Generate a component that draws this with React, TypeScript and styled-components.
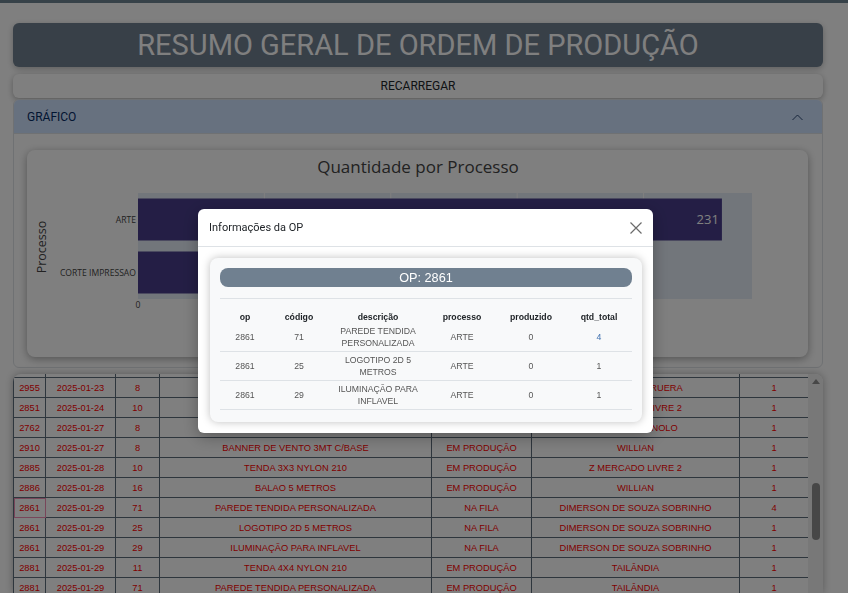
import React from 'react'
import styled, { createGlobalStyle } from 'styled-components'

const GlobalStyle = createGlobalStyle`
  html, body {
    margin: 0;
    padding: 0;
    height: 100%;
    overflow: hidden;
    background: #fff;
  }
  body {
    font-family: Roboto, "Liberation Sans", Arial, sans-serif;
    color: #212529;
  }
  #root {
    height: 100%;
  }
`

type Row = {
  op: string
  data: string
  codigo: string
  descricao: string
  status: string
  cliente: string
  qtd: string
}

// first entry is the row scrolled almost out of view, only its borders show
const rows: Row[] = [
  { op: '', data: '', codigo: '', descricao: '', status: '', cliente: '', qtd: '' },
  { op: '2955', data: '2025-01-23', codigo: '8', descricao: 'TENDA 3X3 NYLON 210', status: 'EM PRODUÇÃO', cliente: 'LOJA ALFA BARUERA', qtd: '1' },
  { op: '2851', data: '2025-01-24', codigo: '10', descricao: 'TENDA 3X3 NYLON 210', status: 'EM PRODUÇÃO', cliente: 'Z MERCADO LIVRE 2', qtd: '1' },
  { op: '2762', data: '2025-01-27', codigo: '8', descricao: 'BANNER DE VENTO 3MT C/BASE', status: 'EM PRODUÇÃO', cliente: 'MARIO SPAGNOLO', qtd: '1' },
  { op: '2910', data: '2025-01-27', codigo: '8', descricao: 'BANNER DE VENTO 3MT C/BASE', status: 'EM PRODUÇÃO', cliente: 'WILLIAN', qtd: '1' },
  { op: '2885', data: '2025-01-28', codigo: '10', descricao: 'TENDA 3X3 NYLON 210', status: 'EM PRODUÇÃO', cliente: 'Z MERCADO LIVRE 2', qtd: '1' },
  { op: '2886', data: '2025-01-28', codigo: '16', descricao: 'BALAO 5 METROS', status: 'EM PRODUÇÃO', cliente: 'WILLIAN', qtd: '1' },
  { op: '2861', data: '2025-01-29', codigo: '71', descricao: 'PAREDE TENDIDA PERSONALIZADA', status: 'NA FILA', cliente: 'DIMERSON DE SOUZA SOBRINHO', qtd: '4' },
  { op: '2861', data: '2025-01-29', codigo: '25', descricao: 'LOGOTIPO 2D 5 METROS', status: 'NA FILA', cliente: 'DIMERSON DE SOUZA SOBRINHO', qtd: '1' },
  { op: '2861', data: '2025-01-29', codigo: '29', descricao: 'ILUMINAÇÃO PARA INFLAVEL', status: 'NA FILA', cliente: 'DIMERSON DE SOUZA SOBRINHO', qtd: '1' },
  { op: '2881', data: '2025-01-29', codigo: '11', descricao: 'TENDA 4X4 NYLON 210', status: 'EM PRODUÇÃO', cliente: 'TAILÂNDIA', qtd: '1' },
  { op: '2881', data: '2025-01-29', codigo: '71', descricao: 'PAREDE TENDIDA PERSONALIZADA', status: 'EM PRODUÇÃO', cliente: 'TAILÂNDIA', qtd: '1' },
]

const gridCols = [32, 70, 44, 272, 100, 208, 69]

const opItems = [
  { op: '2861', codigo: '71', descricao: 'PAREDE TENDIDA PERSONALIZADA', processo: 'ARTE', produzido: '0', qtd: '4' },
  { op: '2861', codigo: '25', descricao: 'LOGOTIPO 2D 5 METROS', processo: 'ARTE', produzido: '0', qtd: '1' },
  { op: '2861', codigo: '29', descricao: 'ILUMINAÇÃO PARA INFLAVEL', processo: 'ARTE', produzido: '0', qtd: '1' },
]

const detailCols = [50, 58, 100, 68, 70, 66]

// chart
const chartData = [
  { label: 'ARTE', value: 231 },
  { label: 'CORTE IMPRESSAO', value: 147 },
]
const PLOT_X = 111
const PLOT_Y = 43
const PLOT_W = 614
const PLOT_H = 106
const X_MAX = 242.9
const scaleX = (v: number) => (v / X_MAX) * PLOT_W

const Chart = () => {
  const band = PLOT_H / chartData.length
  const barH = 42
  return (
    <ChartSvg viewBox="0 0 781 207">
      <text x={391} y={23} textAnchor="middle" fontSize={17} fill="#444">
        Quantidade por Processo
      </text>
      <rect x={PLOT_X} y={PLOT_Y} width={PLOT_W} height={PLOT_H} fill="#e5ecf6" />
      {[50, 100, 150, 200].map((t) => (
        <line
          key={t}
          x1={PLOT_X + scaleX(t)}
          x2={PLOT_X + scaleX(t)}
          y1={PLOT_Y}
          y2={PLOT_Y + PLOT_H}
          stroke="#fff"
          strokeWidth={1}
        />
      ))}
      {chartData.map((d, i) => {
        const y = PLOT_Y + band * i + (band - barH) / 2
        const w = scaleX(d.value)
        return (
          <g key={d.label}>
            <rect x={PLOT_X} y={y} width={w} height={barH} fill="#483d8b" />
            <text x={PLOT_X + w - 3} y={y + barH / 2 + 4.5} textAnchor="end" fontSize={13} fill="#fff">
              {d.value}
            </text>
            <text x={PLOT_X - 2} y={y + barH / 2 + 3} textAnchor="end" fontSize={8.6} fill="#444">
              {d.label}
            </text>
          </g>
        )
      })}
      {[0, 50, 100, 150, 200].map((t) => (
        <text key={t} x={PLOT_X + scaleX(t)} y={158} textAnchor="middle" fontSize={8.6} fill="#444">
          {t}
        </text>
      ))}
      <text
        x={14}
        y={97}
        textAnchor="middle"
        dominantBaseline="central"
        fontSize={12.5}
        fill="#444"
        transform="rotate(-90 14 97)"
      >
        Processo
      </text>
    </ChartSvg>
  )
}

const App = () => {
  return (
    <>
      <GlobalStyle />
      <Page>
        <TopStrip />
        <Content>
          <TitleBar>
            <Title>RESUMO GERAL DE ORDEM DE PRODUÇÃO</Title>
          </TitleBar>
          <ReloadButton>Recarregar</ReloadButton>
          <Accordion>
            <AccordionHeader>
              <span>GRÁFICO</span>
              <svg width="11" height="7" viewBox="0 0 11 7">
                <polyline points="0.5,6 5.5,1 10.5,6" fill="none" stroke="#1e3a66" strokeWidth="0.9" />
              </svg>
            </AccordionHeader>
            <AccordionBody>
              <ChartCard>
                <Chart />
              </ChartCard>
            </AccordionBody>
          </Accordion>
          <TableBox>
            <ScrollArea>
              <Grid>
                <colgroup>
                  {gridCols.map((w, i) => (
                    <col key={i} style={{ width: w }} />
                  ))}
                </colgroup>
                <tbody>
                  {rows.map((r, i) => (
                    <tr key={i}>
                      <GridCell $focused={i === 7}>{r.op}</GridCell>
                      <GridCell>{r.data}</GridCell>
                      <GridCell>{r.codigo}</GridCell>
                      <GridCell>{r.descricao}</GridCell>
                      <GridCell>{r.status}</GridCell>
                      <GridCell>{r.cliente}</GridCell>
                      <GridCell>{r.qtd}</GridCell>
                    </tr>
                  ))}
                </tbody>
              </Grid>
            </ScrollArea>
            <ScrollTrack>
              <ScrollArrow />
              <ScrollThumb />
            </ScrollTrack>
          </TableBox>
        </Content>
      </Page>

      <Backdrop>
        <Modal>
          <ModalHeader>
            <ModalTitle>Informações da OP</ModalTitle>
            <CloseButton aria-label="Fechar">
              <svg width="12" height="12" viewBox="0 0 12 12">
                <path d="M0.5 0.5 L11.5 11.5 M11.5 0.5 L0.5 11.5" stroke="#6b6b6b" strokeWidth="1.2" />
              </svg>
            </CloseButton>
          </ModalHeader>
          <ModalBody>
            <InfoCard>
              <OpPill>OP: 2861</OpPill>
              <DetailTable>
                <colgroup>
                  {detailCols.map((w, i) => (
                    <col key={i} style={{ width: w }} />
                  ))}
                </colgroup>
                <thead>
                  <tr>
                    <DetailHead>op</DetailHead>
                    <DetailHead>código</DetailHead>
                    <DetailHead>descrição</DetailHead>
                    <DetailHead>processo</DetailHead>
                    <DetailHead>produzido</DetailHead>
                    <DetailHead>qtd_total</DetailHead>
                  </tr>
                </thead>
                <tbody>
                  {opItems.map((it, i) => (
                    <tr key={i}>
                      <DetailCell>{it.op}</DetailCell>
                      <DetailCell>{it.codigo}</DetailCell>
                      <DetailCell>{it.descricao}</DetailCell>
                      <DetailCell>{it.processo}</DetailCell>
                      <DetailCell>{it.produzido}</DetailCell>
                      <DetailCell $accent={it.qtd !== '1'}>{it.qtd}</DetailCell>
                    </tr>
                  ))}
                </tbody>
              </DetailTable>
            </InfoCard>
          </ModalBody>
        </Modal>
      </Backdrop>
    </>
  )
}

export default App

const Page = styled.div`
  height: 100vh;
  display: flex;
  flex-direction: column;
`
const TopStrip = styled.div`
  height: 3px;
  flex-shrink: 0;
  background: #6f8592;
`
const Content = styled.div`
  flex: 1;
  min-height: 0;
  display: flex;
  flex-direction: column;
  padding: 20px 25px 0 13px;
`
const TitleBar = styled.header`
  flex-shrink: 0;
  height: 44px;
  display: flex;
  align-items: center;
  justify-content: center;
  background: #708090;
  border-radius: 6px;
  box-shadow: 0 2px 6px rgba(0, 0, 0, 0.25);
`
const Title = styled.h1`
  margin: 0;
  font-size: 29px;
  font-weight: 400;
  line-height: 1;
  color: #fff;
`
const ReloadButton = styled.button`
  flex-shrink: 0;
  margin-top: 7px;
  height: 24px;
  border: none;
  border-radius: 6px;
  background: #fff;
  box-shadow: 0 2px 6px rgba(0, 0, 0, 0.3);
  font-family: Roboto, sans-serif;
  font-size: 12px;
  text-transform: uppercase;
  color: #212529;
  cursor: pointer;
`
const Accordion = styled.section`
  flex-shrink: 0;
  margin-top: 1px;
  border: 1px solid #dee2e6;
  border-radius: 6px;
  overflow: hidden;
  background: #fff;
`
const AccordionHeader = styled.div`
  height: 34px;
  display: flex;
  align-items: center;
  justify-content: space-between;
  padding: 0 19px 0 13px;
  background: #cfe2ff;
  color: #052c65;
  font-size: 12px;
  box-shadow: inset 0 -1px 0 #dee2e6;
`
const AccordionBody = styled.div`
  padding: 16px 14px 10px 13px;
`
const ChartCard = styled.div`
  height: 207px;
  background: #fff;
  border-radius: 8px;
  box-shadow: 0 2px 8px rgba(0, 0, 0, 0.35);
`
const ChartSvg = styled.svg`
  display: block;
  width: 100%;
  height: 100%;
  font-family: "Open Sans", "Liberation Sans", sans-serif;
`
const TableBox = styled.div`
  flex: 1;
  min-height: 0;
  margin-top: 6px;
  display: flex;
  background: #fff;
  border-radius: 8px 8px 0 0;
  box-shadow: 0 0 8px rgba(0, 0, 0, 0.3);
  overflow: hidden;
`
const ScrollArea = styled.div`
  flex: 1;
  min-width: 0;
  overflow: hidden;
`
const Grid = styled.table`
  width: 100%;
  margin-top: -17px;
  border-collapse: collapse;
  table-layout: fixed;
  font-family: "Liberation Sans", Arial, sans-serif;
  font-size: 9.3px;
  color: #f00;
`
const GridCell = styled.td<{ $focused?: boolean }>`
  height: 19px;
  padding: 0 2px;
  border: 1px solid #5d6c7b;
  text-align: center;
  white-space: nowrap;
  overflow: hidden;
  outline: ${(p) => (p.$focused ? '1px solid #f08cb4' : 'none')};
  outline-offset: -1px;
`
const ScrollTrack = styled.div`
  width: 15px;
  flex-shrink: 0;
  display: flex;
  flex-direction: column;
  align-items: center;
  background: #f1f1f1;
`
const ScrollArrow = styled.div`
  margin-top: 5px;
  width: 0;
  height: 0;
  border-left: 4px solid transparent;
  border-right: 4px solid transparent;
  border-bottom: 5px solid #8f8f8f;
`
const ScrollThumb = styled.div`
  margin-top: 99px;
  width: 8px;
  height: 57px;
  border-radius: 4px;
  background: #8f8f8f;
`
const Backdrop = styled.div`
  position: fixed;
  inset: 0;
  z-index: 10;
  display: flex;
  justify-content: center;
  align-items: flex-start;
  padding-top: 209px;
  background: rgba(0, 0, 0, 0.5);
`
const Modal = styled.div`
  width: 455px;
  margin-left: 3px;
  background: #fff;
  border-radius: 6px;
  box-shadow: 0 4px 16px rgba(0, 0, 0, 0.3);
`
const ModalHeader = styled.div`
  height: 37px;
  display: flex;
  align-items: center;
  justify-content: space-between;
  padding: 0 11px;
  border-bottom: 1px solid #dee2e6;
`
const ModalTitle = styled.h5`
  margin: 0;
  font-size: 11px;
  font-weight: 400;
  color: #212529;
`
const CloseButton = styled.button`
  display: flex;
  padding: 0;
  border: none;
  background: none;
  cursor: pointer;
`
const ModalBody = styled.div`
  padding: 11px 11px 11px 12px;
`
const InfoCard = styled.div`
  padding: 10px;
  background: #f8f9fa;
  border-radius: 8px;
  box-shadow: 0 0 8px rgba(0, 0, 0, 0.25);
`
const OpPill = styled.div`
  height: 19px;
  margin-bottom: 11px;
  display: flex;
  align-items: center;
  justify-content: center;
  background: #708090;
  border-radius: 8px;
  color: #fff;
  font-family: "Liberation Sans", Arial, sans-serif;
  font-size: 12.7px;
`
const DetailTable = styled.table`
  width: 100%;
  margin-bottom: 2px;
  border-collapse: collapse;
  table-layout: fixed;
  border-top: 1px solid #dee2e6;
  font-family: "Liberation Sans", Arial, sans-serif;
  font-size: 8.7px;
`
const DetailHead = styled.th`
  height: 23px;
  padding: 0 2px 1px;
  vertical-align: bottom;
  font-weight: 700;
  color: #212529;
`
const DetailCell = styled.td<{ $accent?: boolean }>`
  height: 24px;
  padding: 2px 4px;
  border-bottom: 1px solid #dee2e6;
  line-height: 12px;
  text-align: center;
  color: ${(p) => (p.$accent ? '#3d6fae' : '#555')};
`
